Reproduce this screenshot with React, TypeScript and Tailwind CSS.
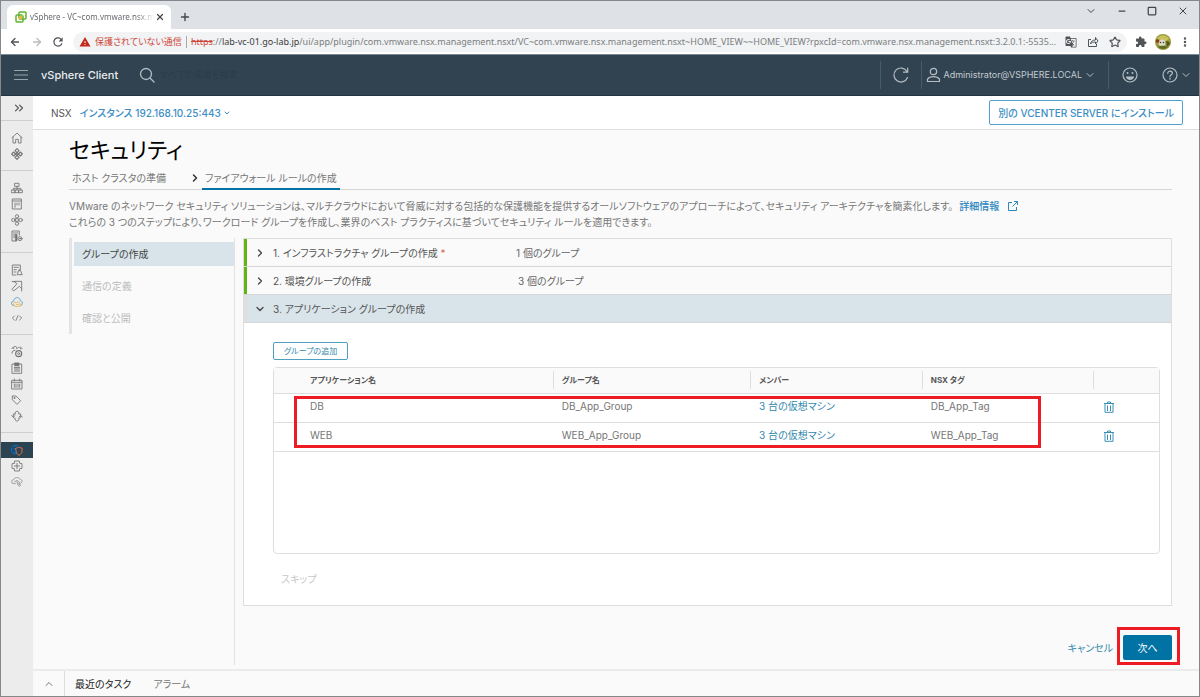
import type { ReactNode } from "react";
import {
  ArrowLeft,
  ArrowRight,
  ChevronDown,
  ChevronRight,
  ChevronUp,
  ChevronsRight,
  Minus,
  MoreVertical,
  Plus,
  Square,
  Star,
  X,
} from "lucide-react";
import { MdExtension, MdGTranslate, MdRefresh, MdWarning } from "react-icons/md";

const icon = {
  viewBox: "0 0 36 36",
  fill: "none",
  stroke: "currentColor",
  strokeWidth: 2.6,
  strokeLinejoin: "round" as const,
  strokeLinecap: "round" as const,
  "aria-hidden": true,
};

function Glyph({ children, size = "size-3" }: { children: ReactNode; size?: string }) {
  return (
    <svg {...icon} className={size}>
      {children}
    </svg>
  );
}

const navGroups: { label: string; drawing: ReactNode; active?: boolean }[][] = [
  [
    {
      label: "ホーム",
      drawing: <path d="M3 17 18 3l15 14M6 15v18h8V22h8v11h8V15" />,
    },
    {
      label: "ショートカット",
      drawing: (
        <path
          strokeWidth="3.2"
          d="m18 2 6 6-6 6-6-6zM8 12l6 6-6 6-6-6zM28 12l6 6-6 6-6-6zM18 22l6 6-6 6-6-6zM14 18l4-4 4 4-4 4z"
        />
      ),
    },
  ],
  [
    {
      label: "インベントリ",
      drawing: (
        <>
          <path d="M12 4h12v9H12zM2 24h10v8H2zM24 24h10v8H24zM13 24h10v8H13zM18 13v11M7 24v-5h22v5" />
        </>
      ),
    },
    {
      label: "コンテンツ ライブラリ",
      drawing: <path d="M5 3h26v30H5zM5 9h26M12 15v13M18 15v6M24 15v6" />,
    },
    {
      label: "ワークロード管理",
      drawing: (
        <>
          <circle cx="18" cy="7" r="5" />
          <circle cx="18" cy="29" r="5" />
          <circle cx="7" cy="18" r="5" />
          <circle cx="29" cy="18" r="5" />
          <path d="M14 14h8v8h-8z" />
        </>
      ),
    },
    {
      label: "グローバル インベントリ リスト",
      drawing: (
        <>
          <path d="M15 33H3V3h22v13M7 9h14M7 15h10M7 21h7" />
          <path d="M14 14h4v18h-4z" fill="currentColor" />
          <circle cx="27" cy="26" r="6" />
          <circle cx="27" cy="26" r="1.5" />
        </>
      ),
    },
  ],
  [
    {
      label: "ポリシーおよびプロファイル",
      drawing: (
        <>
          <path d="M14 33H4V3h24v14M9 10h13M9 17h7M9 24h6" />
          <path d="M18 32h16M20 29l2-9h7l3 9M25 20v-4" />
        </>
      ),
    },
    {
      label: "Auto Deploy",
      drawing: <path d="M10 4h22v22l-7-7L8 33l-5-5 14-16zM3 5h7M32 26v7" />,
    },
    {
      label: "ハイブリッド クラウド サービス",
      drawing: (
        <>
          <path
            stroke="#4f9fd3"
            d="M9 29a7 7 0 0 1-1-14C9 8 14 4 20 5c5 1 8 5 8 9 5 1 7 5 6 9-1 3-3 5-6 6"
          />
          <path stroke="#e8b04a" d="M12 31a6 6 0 1 1 4-11c3-5 11-3 11 3 5 2 3 8-1 8zM15 25h9" />
        </>
      ),
    },
    {
      label: "開発者センター",
      drawing: <path d="m10 12-6 6 6 6M26 12l6 6-6 6M21 11l-6 14" />,
    },
  ],
  [
    {
      label: "管理",
      drawing: (
        <>
          <path d="M3 22c0-7 4-9 9-9M17 8a5 5 0 1 0-9 0M20 6a5 5 0 0 1 9 3M3 8l4-5M29 3l4 5" />
          <circle cx="23" cy="23" r="9" strokeWidth="3.4" />
          <circle cx="23" cy="23" r="3" />
        </>
      ),
    },
    {
      label: "タスク",
      drawing: (
        <>
          <path d="M4 6h28v28H4z" />
          <path d="M12 3h12v8H12z" fill="currentColor" />
          <path d="M10 16h16M10 21h16M10 27h16" strokeWidth="3" />
        </>
      ),
    },
    {
      label: "イベント",
      drawing: <path d="M3 7h30v26H3zM3 13h30M10 3v6M26 3v6M10 18v10M15 18v10M21 18v10M26 18v10" />,
    },
    {
      label: "タグとカスタム属性",
      drawing: (
        <>
          <path d="M4 7v10l14 14 11-11L15 6H5z" />
          <circle cx="10" cy="12" r="1.5" />
        </>
      ),
    },
    {
      label: "Lifecycle Manager",
      drawing: (
        <>
          <path d="M7 20v-8h6c-2-5 1-8 5-8s7 3 5 8h6v8M7 22c1 3 3 3 6 3-2 5 1 8 5 8s7-3 5-8c4 0 6-1 6-3" />
          <path d="m2 17 5 4 5-4M24 21l5-4 5 4" />
        </>
      ),
    },
  ],
  [
    {
      label: "NSX",
      active: true,
      drawing: (
        <>
          <circle cx="14" cy="17" r="13" fill="#0b5c98" stroke="#1173b8" />
          <path stroke="#17384f" d="M4 12c8-4 14 0 20-4M4 22c6-5 10-2 14 3" />
          <path
            d="M15 12c4 0 7-1 9-3 2 2 5 3 9 3v9c0 6-4 10-9 13-5-3-9-7-9-13z"
            fill="#2c4352"
            stroke="#dd7149"
            strokeWidth="3"
          />
        </>
      ),
    },
    {
      label: "プラグイン",
      drawing: <path d="M11 3h14l1 7 7 1v14l-7 1-1 7H11l-1-7-7-1V11l7-1zM18 10v16M10 18h16" />,
    },
    {
      label: "クラウド",
      drawing: (
        <g opacity=".75">
          <path d="M13 23H8a6 6 0 0 1 0-12c2-7 15-9 19-1 7 0 8 9 2 12h-3" />
          <path d="M11 18c2-5 8-6 11-2l4 4M18 16l2 9 5 6 4-4-7-4" />
        </g>
      ),
    },
  ],
];

const groups = [
  { app: "DB", group: "DB_App_Group", tag: "DB_App_Tag" },
  { app: "WEB", group: "WEB_App_Group", tag: "WEB_App_Tag" },
];

function BrowserChrome() {
  return (
    <header className="font-['Noto_Sans','Noto_Sans_CJK_JP',sans-serif]">
      <div className="flex h-7 items-start bg-[#dee1e6] pl-1.5 text-[#44474a]">
        <div className="mt-1 flex h-6 w-[164px] items-center rounded-t-md bg-white px-2">
          <svg viewBox="0 0 24 24" className="size-3 shrink-0" fill="none" aria-hidden>
            <rect x="8" y="2" width="14" height="14" rx="2" stroke="#5eb52f" strokeWidth="3" />
            <rect x="2" y="8" width="14" height="14" rx="2" stroke="#5eb52f" strokeWidth="3" />
            <path d="M8 10h6v6H8z" fill="#f2b233" />
            <path d="M15 5h4v4h-4zM5 15h3v4H5z" fill="#fff3c4" />
          </svg>
          <span className="ml-[3px] flex-1 bg-linear-to-r from-[#5f6368] from-85% to-transparent bg-clip-text text-[8px] whitespace-nowrap text-transparent">
            vSphere - VC~com.vmware.nsx.m
          </span>
          <button type="button" aria-label="タブを閉じる">
            <X className="size-2.5" strokeWidth={3} />
          </button>
        </div>
        <button type="button" aria-label="新しいタブ" className="mt-2.5 ml-2">
          <Plus className="size-3" strokeWidth={2.8} />
        </button>
        <div className="mt-1 ml-auto flex items-center gap-5 pr-2.5">
          <button type="button" aria-label="タブを検索">
            <ChevronDown className="size-3" />
          </button>
          <button type="button" aria-label="最小化">
            <Minus className="size-2.5" strokeWidth={3} />
          </button>
          <button type="button" aria-label="最大化">
            <Square className="size-2.5" strokeWidth={3} />
          </button>
          <button type="button" aria-label="閉じる">
            <X className="size-3" />
          </button>
        </div>
      </div>
      <div className="flex h-[25px] items-center bg-white pr-2 pl-2 text-[#505357]">
        <button type="button" aria-label="戻る">
          <ArrowLeft className="size-3" strokeWidth={2.6} />
        </button>
        <button type="button" aria-label="進む" className="ml-2.5 text-[#b9bbbe]">
          <ArrowRight className="size-3" strokeWidth={2.6} />
        </button>
        <button type="button" aria-label="再読み込み" className="ml-2">
          <MdRefresh className="size-3.5" />
        </button>
        <div className="ml-2 flex h-5 min-w-0 flex-1 items-center rounded-full bg-[#f1f3f4] pr-1.5 pl-1.5 text-[9px]">
          <MdWarning className="size-3 shrink-0 text-[#c5281c]" />
          <span className="ml-1 shrink-0 text-[#cf4a40]">保護されていない通信</span>
          <span className="mx-1 h-3 w-px shrink-0 bg-[#a8abae]" />
          <span className="min-w-0 truncate text-[#7b7e81]">
            <span className="text-[#cf4a40] line-through">https</span>
            ://<span className="text-[#3b3e41]">lab-vc-01.go-lab.jp</span>
            /ui/app/plugin/com.vmware.nsx.management.nsxt/VC~com.vmware.nsx.management.nsxt~HOME_VIEW~~HOME_VIEW?rpxcId=com.vmware.nsx.management.nsxt:3.2.0.1:-5535...
          </span>
          <div className="ml-auto flex shrink-0 items-center gap-2.5 pl-2">
            <button type="button" aria-label="翻訳">
              <MdGTranslate className="size-3" />
            </button>
            <button type="button" aria-label="共有">
              <svg viewBox="0 0 24 24" className="size-3" fill="none" stroke="currentColor" strokeWidth="2" aria-hidden>
                <path d="M8 7H3v14h16v-5M7 16c1-6 5-8 10-8V3l5 7-5 6v-4c-5 0-8 1-10 4z" />
              </svg>
            </button>
            <button type="button" aria-label="ブックマーク">
              <Star className="size-3" strokeWidth={2.4} />
            </button>
          </div>
        </div>
        <div className="ml-2 flex items-center gap-2">
          <button type="button" aria-label="拡張機能">
            <MdExtension className="size-3" />
          </button>
          <button type="button" aria-label="プロフィール">
            <svg viewBox="0 0 16 16" className="size-4" aria-hidden>
              <circle cx="8" cy="8" r="8" fill="#9c9a3a" />
              <path d="M2 5c3-5 9-5 12 0l-3 2-5-1z" fill="#c9c15c" />
              <circle cx="7" cy="9" r="3.4" fill="#dedac8" />
              <circle cx="2.6" cy="7" r="1.8" fill="#8d3d24" />
              <circle cx="5.5" cy="8.5" r=".8" fill="#3d3f3a" />
              <circle cx="8.500" cy="8.5" r=".8" fill="#3d3f3a" />
              <path d="M11 7c2 0 4 1 4 3l-3 3z" fill="#4c5b25" />
              <path d="M3 13c3-2 7-1 10 0a8 8 0 0 1-10 0z" fill="#5d6b25" />
            </svg>
          </button>
          <button type="button" aria-label="メニュー">
            <MoreVertical className="size-3" strokeWidth={3} />
          </button>
        </div>
      </div>
    </header>
  );
}

function AppHeader() {
  return (
    <header className="flex h-[42px] items-center border-y border-t-[#7e8a93] border-b-[#22343f] bg-[#314351] pr-[7px] text-[#b4bdc3]">
      <button type="button" aria-label="メニュー" className="ml-3">
        <svg viewBox="0 0 16 16" className="size-4" stroke="#98a3aa" strokeWidth="1.2" aria-hidden>
          <path d="M1 3.5h14M1 8h14M1 12.5h14" />
        </svg>
      </button>
      <span className="ml-3 text-[11px] font-medium text-[#e9ecee]">vSphere Client</span>
      <label className="ml-5 flex items-center">
        <svg viewBox="0 0 18 18" className="size-[18px]" fill="none" stroke="currentColor" strokeWidth="1.3" aria-hidden>
          <circle cx="8" cy="8" r="5.5" />
          <path d="m12 12 4 4" strokeLinecap="round" />
        </svg>
        <input
          type="search"
          aria-label="検索"
          placeholder="すべての環境を検索"
          className="ml-1 w-24 bg-transparent text-[9px] outline-none placeholder:text-[#2c3c48]"
        />
      </label>
      <div className="ml-auto flex items-center">
        <button type="button" aria-label="更新" className="flex h-7 w-[41px] items-center justify-center border-l border-[#4a5a66]">
          <svg viewBox="0 0 18 18" className="size-[18px]" fill="none" stroke="currentColor" strokeWidth="1.2" aria-hidden>
            <path d="M15.5 11.5A7 7 0 1 1 15 5.5M15.7 2v4.2h-4.2" strokeLinecap="round" />
          </svg>
        </button>
        <button type="button" className="flex h-7 items-center border-l border-[#4a5a66] pr-3 pl-1 text-[9px]">
          <svg viewBox="0 0 16 16" className="size-4" fill="none" stroke="currentColor" strokeWidth="1.2" aria-hidden>
            <circle cx="7.5" cy="4.5" r="3.2" />
            <path d="M1.5 14.5v-2.3c2.4-3.4 9.6-3.4 12 0v2.3z" strokeLinejoin="round" />
          </svg>
          <span className="mx-0.5 text-[#c3cad0]">Administrator@VSPHERE.LOCAL</span>
          <ChevronDown className="size-3" />
        </button>
        <button type="button" aria-label="フィードバック" className="flex h-7 w-[42px] items-center justify-center border-l border-[#4a5a66]">
          <svg viewBox="0 0 16 16" className="size-4" fill="none" stroke="currentColor" strokeWidth="1.2" aria-hidden>
            <circle cx="8" cy="8" r="7" />
            <path d="M4 9.5h8c0 4.5-8 4.5-8 0z" fill="currentColor" stroke="none" />
            <circle cx="5.5" cy="6" r="1" fill="currentColor" stroke="none" />
            <circle cx="10.5" cy="6" r="1" fill="currentColor" stroke="none" />
          </svg>
        </button>
        <button type="button" aria-label="ヘルプ" className="ml-3 flex items-center gap-0.5">
          <svg viewBox="0 0 16 16" className="size-4" fill="none" stroke="currentColor" strokeWidth="1.2" aria-hidden>
            <circle cx="8" cy="8" r="7" />
            <path d="M5.8 6.300c0-3 4.600-2.800 4.600-.1C10.400 7.800 8 7.800 8 9.600M8 11.200v1" strokeLinecap="round" />
          </svg>
          <ChevronDown className="size-3" />
        </button>
      </div>
    </header>
  );
}

function SideBar() {
  return (
    <nav aria-label="メイン" className="w-8 shrink-0 bg-[#ececec] text-[#737373]">
      <button type="button" aria-label="展開" className="flex h-6 w-full items-center justify-center pl-1 text-[#555]">
        <ChevronsRight className="size-3.5" />
      </button>
      {navGroups.map((items, i) => (
        <ul key={i} className="border-t border-[#cfcfcf] pt-[9px] pb-2">
          {items.map((item) => (
            <li key={item.label}>
              <a
                href="#"
                aria-label={item.label}
                className={
                  item.active
                    ? "flex h-4 items-center justify-center bg-[#2c4352]"
                    : "flex h-4 items-center justify-center"
                }
              >
                <Glyph>{item.drawing}</Glyph>
              </a>
            </li>
          ))}
        </ul>
      ))}
    </nav>
  );
}

function GroupTable() {
  return (
    <div className="relative mt-[7px] min-h-[187px] rounded-sm border border-[#dedede] bg-white">
      <table className="w-full table-fixed text-left text-[10px]">
        <colgroup>
          <col className="w-[31.5%]" />
          <col className="w-[22.3%]" />
          <col className="w-[19.4%]" />
          <col className="w-[19.4%]" />
          <col className="w-[7.4%]" />
        </colgroup>
        <thead>
          <tr className="h-[25px] border-b border-[#dedede] bg-[#fafafa] text-[8px] text-[#565656]">
            <th className="pl-9 font-bold">アプリケーション名</th>
            {["グループ名", "メンバー", "NSX タグ"].map((title) => (
              <th key={title} className="font-bold">
                <div className="flex h-[18px] items-center border-l border-[#dedede] pl-2">{title}</div>
              </th>
            ))}
            <th aria-label="操作">
              <div className="h-[18px] border-l border-[#dedede]" />
            </th>
          </tr>
        </thead>
        <tbody className="text-[#767676]">
          {groups.map((row) => (
            <tr key={row.app} className="h-[29px] border-b border-[#dedede] align-top leading-4">
              <td className="pt-1 pl-9">{row.app}</td>
              <td className="pt-1 pl-[9px]">{row.group}</td>
              <td className="pt-1 pl-[9px]">
                <a href="#" className="text-[#3489ae]">
                  3 台の仮想マシン
                </a>
              </td>
              <td className="pt-1 pl-[9px]">{row.tag}</td>
              <td className="pt-[7px] pl-2.5">
                <button type="button" aria-label={`${row.app} を削除`} className="block text-[#3a8fb7]">
                  <svg viewBox="0 0 12 12" className="size-3" fill="none" stroke="currentColor" aria-hidden>
                    <path d="M1 2.500h10M4.500 2V1h3v1M2 3v8.300h8V3M4.500 4.500v5.500M7.500 4.500v5.500" />
                  </svg>
                </button>
              </td>
            </tr>
          ))}
        </tbody>
      </table>
      <div className="pointer-events-none absolute top-7 right-[118px] left-5 h-[52px] border-[3px] border-[#ed1c24]" />
    </div>
  );
}

function Accordion() {
  return (
    <div className="min-w-0 flex-1 border border-[#dedede]">
      <button type="button" className="flex h-[27px] w-full items-center border-l-3 border-[#60b515] pl-[7px] text-left">
        <ChevronRight className="size-3 text-[#444]" strokeWidth={2.6} />
        <span className="ml-[7px] w-[243px]">
          1. インフラストラクチャ グループの作成 <span className="text-[#c92100]/70">*</span>
        </span>
        <span className="text-[#666]">1 個のグループ</span>
      </button>
      <div className="border-t border-[#d6d6d6]">
        <button type="button" className="flex h-[27px] w-full items-center border-l-3 border-[#60b515] pl-[7px] text-left">
          <ChevronRight className="size-3 text-[#444]" strokeWidth={2.6} />
          <span className="ml-[7px] w-[245px]">2. 環境グループの作成</span>
          <span className="text-[#666]">3 個のグループ</span>
        </button>
      </div>
      <div className="border-y border-[#d6d6d6]">
        <button
          type="button"
          aria-expanded="true"
          className="flex h-[27px] w-full items-center border-l-3 border-[#dedede] bg-[#d9e4ea] pl-[7px] text-left"
        >
          <ChevronDown className="size-3 text-[#444]" strokeWidth={2.6} />
          <span className="ml-[7px]">3. アプリケーション グループの作成</span>
        </button>
      </div>
      <div className="bg-white pt-[19px] pr-[11px] pb-[18px] pl-[29px]">
        <button type="button" className="block h-[18px] rounded-xs border border-[#4f9fc0] px-2.5 text-[8px] text-[#3489ae]">
          グループの追加
        </button>
        <GroupTable />
        <button type="button" disabled className="mt-[17px] block h-4 px-2 text-[#c8c8c8]">
          スキップ
        </button>
      </div>
    </div>
  );
}

function Page() {
  return (
    <main className="flex min-w-0 flex-1 flex-col">
      <div className="flex h-[34px] items-center border-b border-[#dedede] bg-white pr-4 pl-[18px]">
        <span className="text-[10px] text-[#565656]">NSX</span>
        <button type="button" className="ml-2 flex items-center text-[10px] font-medium text-[#3c8ec4]">
          インスタンス 192.168.10.25:443
          <ChevronDown className="ml-0.5 size-2" strokeWidth={3} />
        </button>
        <button
          type="button"
          className="ml-auto h-[25px] rounded-xs border border-[#4f9fcf] px-2 text-[10px] font-medium text-[#3c8ec4]"
        >
          別の VCENTER SERVER にインストール
        </button>
      </div>
      <div className="flex flex-1 flex-col pr-[27px] pl-9">
        <h1 className="mt-1 text-[22px] leading-8 text-black">セキュリティ</h1>
        <div className="flex h-6 items-stretch border-b border-[#d6d6d6] text-[#777]">
          <a href="#" className="flex w-[120px] items-center pl-[3px]">
            ホスト クラスタの準備
          </a>
          <ChevronRight className="size-3 self-center text-[#333]" strokeWidth={3} />
          <a href="#" aria-current="step" className="ml-px -mb-px flex items-center border-b-2 border-[#0072a3] px-[3px] pt-0.5">
            ファイアウォール ルールの作成
          </a>
        </div>
        <p className="mt-2 leading-4 text-[#777]">
          VMware のネットワーク セキュリティ ソリューションは、マルチクラウドにおいて脅威に対する包括的な保護機能を提供するオールソフトウェアのアプローチによって、セキュリティ
          アーキテクチャを簡素化します。
          <a href="#" className="ml-1.5 inline-flex items-center gap-2 font-medium text-[#2f87bf]">
            詳細情報
            <svg viewBox="0 0 12 12" className="size-3" fill="none" stroke="currentColor" aria-hidden>
              <path d="M5 2.500H1.500v8h8V7M7 1.500h3.500V5M10.500 1.500 5.500 6.500" />
            </svg>
          </a>
          <br />
          これらの 3 つのステップにより、ワークロード グループを作成し、業界のベスト プラクティスに基づいてセキュリティ ルールを適用できます。
        </p>
        <div className="mt-2 flex flex-1">
          <div className="mb-1 w-[166px] border-r border-[#e2e2e2]">
            <ul className="flex flex-col gap-2 border-l-3 border-[#e4e4e4] py-1 pl-0.5 text-[#bcbcbc]">
              <li>
                <a href="#" aria-current="step" className="flex h-6 items-center bg-[#d9e4ea] pl-2 text-[#444]">
                  グループの作成
                </a>
              </li>
              <li className="flex h-6 items-center pl-2">通信の定義</li>
              <li className="flex h-6 items-center pl-2">確認と公開</li>
            </ul>
          </div>
          <div className="flex min-w-0 flex-1 flex-col pl-2">
            <div className="flex text-[#555]">
              <Accordion />
            </div>
            <div className="mt-[29px] flex items-center justify-end gap-2.5">
              <button type="button" className="text-[#3489ae]">
                キャンセル
              </button>
              <div className="relative">
                <button type="button" className="block h-[25px] w-[49px] rounded-xs bg-[#0072a3] text-[10px] text-white">
                  次へ
                </button>
                <div className="pointer-events-none absolute -top-2 -right-2 -bottom-[5px] -left-1.5 border-[3px] border-[#ed1c24]" />
              </div>
            </div>
          </div>
        </div>
      </div>
      <footer className="flex h-[27px] items-center border-t-2 border-[#ebebeb] text-[#777]">
        <button type="button" aria-label="開く" className="flex h-full w-8 items-center justify-center border-r border-[#dedede]">
          <ChevronUp className="size-3" />
        </button>
        <button type="button" className="ml-2.5 text-[#222]">
          最近のタスク
        </button>
        <button type="button" className="ml-[22px]">
          アラーム
        </button>
      </footer>
    </main>
  );
}

export default function App() {
  return (
    <div className="flex min-h-screen flex-col border border-[#85878a] bg-[#fafafa] font-[Inter,'Noto_Sans_CJK_JP',sans-serif] text-[10px] leading-4 [font-feature-settings:'palt']">
      <BrowserChrome />
      <AppHeader />
      <div className="flex flex-1">
        <SideBar />
        <Page />
      </div>
    </div>
  );
}
